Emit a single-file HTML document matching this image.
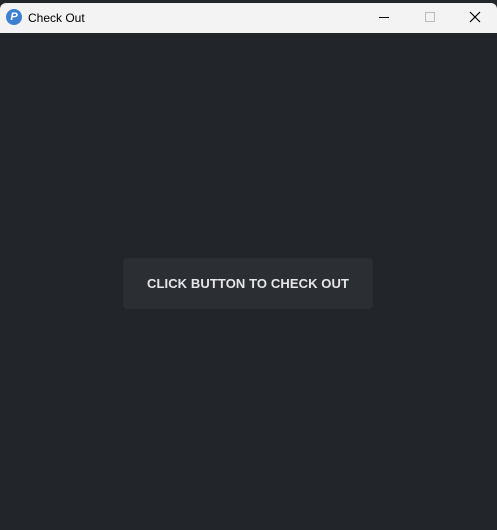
<!DOCTYPE html>
<html><head><style>
html,body{margin:0;padding:0;width:497px;height:530px;overflow:hidden;background:#222529;font-family:"Liberation Sans",sans-serif;}
.tb{position:absolute;left:0;top:3px;width:497px;height:30px;background:#f3f3f3;border-radius:6px 6px 0 0;}
.ic{position:absolute;left:6px;top:6px;width:16px;height:16px;border-radius:50%;background:#3d7fd0;color:#fff;font:bold 11px "Liberation Sans",sans-serif;text-align:center;line-height:16px;font-style:italic;}
.tt{position:absolute;left:28px;top:8px;font-size:12px;color:#000;}
.btn{position:absolute;left:123px;top:258px;width:250px;height:51px;background:#2b2e33;border-radius:4px;color:#e6e6e6;font-weight:bold;font-size:13px;text-align:center;line-height:51px;letter-spacing:0.1px;}
</style></head><body>
<div class="tb">
<div class="ic">P</div>
<div class="tt">Check Out</div>
<svg style="position:absolute;left:370px;top:0" width="127" height="30">
<line x1="9" y1="14.5" x2="19" y2="14.5" stroke="#000" stroke-width="1"/>
<rect x="55.5" y="9.5" width="9" height="9" fill="none" stroke="#bbb" stroke-width="1"/>
<line x1="100" y1="9" x2="110" y2="19" stroke="#000" stroke-width="1.2"/>
<line x1="110" y1="9" x2="100" y2="19" stroke="#000" stroke-width="1.2"/>
</svg>
</div>
<div class="btn">CLICK BUTTON TO CHECK OUT</div>
</body></html>
